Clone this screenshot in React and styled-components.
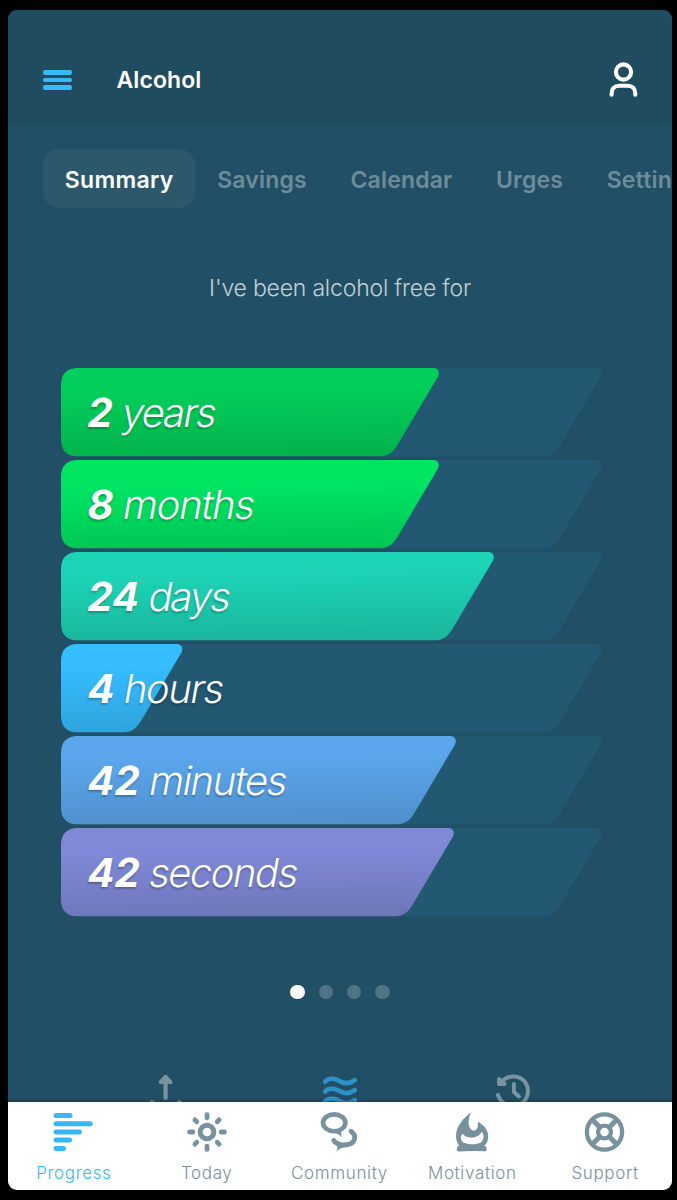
import styled, { createGlobalStyle } from "styled-components";

const bars = [
  { value: 2, unit: "years", width: 378, from: "#02cf5b", to: "#03b04b", tracking: -1.9 },
  { value: 8, unit: "months", width: 378, from: "#00e663", to: "#00c455", tracking: -1.2 },
  { value: 24, unit: "days", width: 433, from: "#1dd4b6", to: "#1ab49b", tracking: -2 },
  { value: 4, unit: "hours", width: 121.5, from: "#35bdff", to: "#2fa3dc", tracking: -1.4 },
  { value: 42, unit: "minutes", width: 395, from: "#5ba6ec", to: "#4f8fcb", tracking: -1.4 },
  { value: 42, unit: "seconds", width: 393, from: "#7f89d7", to: "#6e76b8", tracking: -1.5 },
];

const barShape = (w) =>
  `M16 0H${w - 6}C${w - 1} 0 ${w + 1} 4 ${w - 1} 8.5L${w - 41} 76C${w - 46} 84.5 ${w - 51} 88.5 ${w - 60} 88.5H16C6 88.5 0 82.5 0 72.5V16C0 6 6 0 16 0Z`;

export default function App() {
  return (
    <Phone>
      <GlobalStyle />
      <Header>
        <MenuButton aria-label="Menu">
          <MenuLine />
          <MenuLine />
          <MenuLine />
        </MenuButton>
        <Title>Alcohol</Title>
        <ProfileIcon />
      </Header>
      <Content>
        <Tabs>
          <Tab $active>Summary</Tab>
          <Tab>Savings</Tab>
          <Tab>Calendar</Tab>
          <Tab>Urges</Tab>
          <Tab>Settings</Tab>
        </Tabs>
        <Intro>I've been alcohol free for</Intro>
        <BarList>
          {bars.map((bar) => (
            <BarRow key={bar.unit}>
              <BarFill $width={bar.width} $from={bar.from} $to={bar.to} />
              <BarLabel>
                <BarValue>{bar.value}</BarValue>
                <BarUnit $tracking={bar.tracking}>{bar.unit}</BarUnit>
              </BarLabel>
            </BarRow>
          ))}
        </BarList>
        <Dots>
          <Dot $active />
          <Dot />
          <Dot />
          <Dot />
        </Dots>
        <Actions>
          <ShareIcon />
          <WavesIcon />
          <HistoryIcon />
        </Actions>
      </Content>
      <BottomNav>
        <NavItem $active>
          <ProgressIcon />
          <NavText>Progress</NavText>
        </NavItem>
        <NavItem>
          <TodayIcon />
          <NavText>Today</NavText>
        </NavItem>
        <NavItem>
          <CommunityIcon />
          <NavText>Community</NavText>
        </NavItem>
        <NavItem>
          <MotivationIcon />
          <NavText>Motivation</NavText>
        </NavItem>
        <NavItem>
          <SupportIcon />
          <NavText>Support</NavText>
        </NavItem>
      </BottomNav>
    </Phone>
  );
}

function ProfileIcon() {
  return (
    <StrokeIcon width="30" height="36" viewBox="0 0 30 36" $stroke={4.1}>
      <circle cx="14.5" cy="10" r="7.6" />
      <path d="M2.6 32.8V31.5C2.6 26.5 5.7 23.7 10.2 23.7H18.7C23.2 23.7 26.3 26.5 26.3 31.5V32.8" />
    </StrokeIcon>
  );
}

function ShareIcon() {
  return (
    <ActionIcon width="36" height="40" viewBox="0 0 36 40" $stroke={4.2}>
      <path d="M18.6 25V5" />
      <path d="M13.8 9.2L18.6 4L23.4 9.2L18.6 7.5Z" fill="currentColor" />
      <path d="M5 29.3L8 31.5M32.5 29.3L29.5 31.5" />
    </ActionIcon>
  );
}

function WavesIcon() {
  return (
    <ActionIcon
      width="36"
      height="40"
      viewBox="0 0 36 40"
      $stroke={4.6}
      $color="#2e92c7"
    >
      <path d="M3.2 8.6C6 5 12 4.8 17 7.7C22 10.8 28 10.8 32.8 7.2" />
      <path d="M3.2 18.6C6 15 12 14.8 17 17.7C22 20.8 28 20.8 32.8 17.2" />
      <path d="M3.2 28.6C6 25 12 24.8 17 27.7C22 30.8 28 30.8 32.8 27.2" />
    </ActionIcon>
  );
}

function HistoryIcon() {
  return (
    <ActionIcon width="36" height="40" viewBox="0 0 36 40" $stroke={4}>
      <path d="M5.5 9C12.5 1.2 23.5 2 28.9 8.7C34 16 32.5 25 26 30.2C19 35 9.5 33.5 4.1 26.5L1.8 22" />
      <path d="M17.9 11V19L23 23.5" />
      <path d="M3 6V11H8.6Z" fill="currentColor" />
    </ActionIcon>
  );
}

function ProgressIcon() {
  return (
    <StrokeIcon width="42" height="40" viewBox="0 0 42 40" $stroke={5}>
      <path d="M3 3.5H17M3 11.8H37.2M3 20H26.4M3 28.1H16.5M3 36.4H10.5" />
    </StrokeIcon>
  );
}

function TodayIcon() {
  return (
    <StrokeIcon width="40" height="40" viewBox="0 0 40 40" $stroke={4.8}>
      <circle cx="20" cy="20" r="6.8" strokeWidth="5" />
      <path d="M20 2.6V5.8M20 34.2V37.4M2.6 20H5.8M34.2 20H37.4M7.9 7.9L9.8 9.8M30.2 30.2L32.1 32.1M32.1 7.9L30.2 9.8M9.8 30.2L7.9 32.1" />
    </StrokeIcon>
  );
}

function CommunityIcon() {
  return (
    <StrokeIcon width="40" height="40" viewBox="0 0 40 40" $stroke={4.6}>
      <ellipse cx="15.2" cy="10.8" rx="11.2" ry="8.4" />
      <path d="M13.5 20.6C17.5 21 20 22.5 22.9 25.2C22 22 21.5 20 23.5 17Z" fill="currentColor" stroke="none" />
      <path d="M32 19.2C38 23.5 36.5 30.5 29.5 32.4C23.5 34 17 32 14.8 28.4" strokeWidth="4.8" />
      <path d="M17.5 31.5C19 34.5 18.5 37 17.4 39.7C20 37 23 35.5 27 34.8Z" fill="currentColor" stroke="none" />
    </StrokeIcon>
  );
}

function MotivationIcon() {
  return (
    <StrokeIcon width="40" height="40" viewBox="0 0 40 40" $stroke={4}>
      <path
        d="M18.8.5C12 5.5 4 14 4 24C4 28.5 5.5 31.8 7.5 34L20 36.5L32 34C35 31.5 36.5 28 36.2 23C35.8 17.5 31 12 25.7 9.8C26.6 14.2 25.3 18.2 22 18.8C15.8 17.8 15.2 8.8 18.8.5ZM10.4 21.8C13.4 25.5 19 26.4 23.5 25C26.7 23.8 28.8 21.8 29.8 19.8C32.6 24 32 28 28.8 30.4C24.3 32.8 16.3 32.8 11.4 30.4C8.6 28.6 8.2 24.8 10.4 21.8Z"
        fill="currentColor"
        fillRule="evenodd"
        stroke="none"
      />
      <path d="M6.7 37.5C14 37.2 25.5 36.2 32.7 37.4M6.9 35.9H32.5" />
    </StrokeIcon>
  );
}

function SupportIcon() {
  return (
    <StrokeIcon width="40" height="40" viewBox="0 0 40 40" $stroke={4.3}>
      <circle cx="19.5" cy="20" r="17.6" />
      <circle cx="19.5" cy="20" r="6.4" />
      <path d="M8 8.5L14.5 15M31 8.5L24.5 15M8 31.5L14.5 25M31 31.5L24.5 25" strokeWidth="5.2" />
    </StrokeIcon>
  );
}

const GlobalStyle = createGlobalStyle`
  * {
    box-sizing: border-box;
  }
  body {
    margin: 0;
    background-color: #000;
    font-family: Inter, "Liberation Sans", sans-serif;
  }
`;

const Phone = styled.div`
  display: flex;
  flex-direction: column;
  width: 664px;
  height: 1180px;
  margin: 10px 5px 10px 8px;
  border-radius: 9px;
  overflow: hidden;
  background-color: #214f65;
`;

const Header = styled.header`
  display: flex;
  align-items: center;
  flex: 0 0 113px;
  padding: 27px 33px 0 35px;
  background-color: #204c60;
`;

const MenuButton = styled.button`
  display: flex;
  flex-direction: column;
  gap: 3px;
  width: 29px;
  padding: 0;
  border: none;
  background: none;
`;

const MenuLine = styled.span`
  height: 4.6px;
  border-radius: 2px;
  background-color: #38b9fa;
`;

const Title = styled.h1`
  flex: 1;
  margin: 0 0 0 44.5px;
  color: white;
  font-size: 23px;
  font-weight: 600;
  letter-spacing: 0.1px;
`;

const StrokeIcon = styled.svg`
  display: block;
  flex-shrink: 0;
  overflow: visible;
  color: ${({ $color }) => $color || "inherit"};
  fill: none;
  stroke: currentColor;
  stroke-width: ${({ $stroke }) => $stroke};
  stroke-linecap: round;
  stroke-linejoin: round;

  ${Header} & {
    color: white;
  }
`;

const ActionIcon = styled(StrokeIcon)`
  color: ${({ $color }) => $color || "#79949f"};
`;

const Content = styled.main`
  display: flex;
  flex-direction: column;
  flex: 1;
  min-height: 0;
  overflow: hidden;
`;

const Tabs = styled.nav`
  display: flex;
  flex-shrink: 0;
  margin: 26px 0 0 35px;
  overflow: hidden;
`;

const Tab = styled.button`
  flex-shrink: 0;
  height: 59px;
  padding: 2px 21.8px 0;
  border: none;
  border-radius: 16px;
  background-color: ${({ $active }) => ($active ? "#2c586c" : "transparent")};
  color: ${({ $active }) => ($active ? "white" : "#6d8c9b")};
  font-family: inherit;
  font-size: 23px;
  font-weight: 600;
  letter-spacing: ${({ $active }) => ($active ? 0.3 : 0.18)}px;
`;

const Intro = styled.p`
  margin: 64px 0 0;
  color: #c2d0d7;
  font-size: 23px;
  font-weight: 300;
  line-height: 32px;
  letter-spacing: -0.2px;
  text-align: center;
`;

const BarList = styled.div`
  display: flex;
  flex-direction: column;
  flex-shrink: 0;
  gap: 3.5px;
  width: 541px;
  margin: 64px 0 0 53px;
`;

const BarRow = styled.div`
  height: 88.5px;
  background-color: #225871;
  clip-path: path("${barShape(541)}");
  display: grid;
`;

const BarFill = styled.div`
  grid-area: 1 / 1;
  width: ${({ $width }) => $width}px;
  background: linear-gradient(
    179deg,
    ${({ $from }) => $from} 25%,
    ${({ $to }) => $to}
  );
  clip-path: path("${({ $width }) => barShape($width)}");
`;

/* slanted upright letters keep the two-storey "a" */
const BarLabel = styled.div`
  grid-area: 1 / 1;
  z-index: 1;
  display: flex;
  align-items: center;
  gap: 9.5px;
  padding-left: 27px;
  color: white;
  font-size: 40px;
  text-shadow: 0 2px 2px rgba(0, 0, 0, 0.25);
  transform: skewX(-10deg);
`;

const BarValue = styled.strong`
  font-weight: 700;
`;

const BarUnit = styled.span`
  font-weight: 280;
  letter-spacing: ${({ $tracking }) => $tracking}px;
`;

const Dots = styled.div`
  display: flex;
  justify-content: center;
  gap: 14px;
  margin-top: 68px;
`;

const Dot = styled.span`
  width: 14.4px;
  height: 14.4px;
  border-radius: 50%;
  background-color: ${({ $active }) => ($active ? "white" : "#4e7384")};
`;

const Actions = styled.div`
  display: flex;
  justify-content: space-between;
  flex-shrink: 0;
  margin: 74px 140px 0 139px;
`;

const BottomNav = styled.nav`
  display: grid;
  grid-template-columns: repeat(5, 1fr);
  flex: 0 0 88px;
  background-color: white;
  box-shadow: 0 -1px 3px rgba(0, 0, 0, 0.3);
  z-index: 1;
`;

const NavItem = styled.a`
  display: flex;
  flex-direction: column;
  align-items: center;
  padding: 10px 1px 0 0;
  color: ${({ $active }) => ($active ? "#38b6f8" : "#77929e")};
`;

const NavText = styled.span`
  margin-top: 10px;
  font-size: 17px;
  font-weight: 360;
  line-height: 22px;
  letter-spacing: 0.65px;
`;
